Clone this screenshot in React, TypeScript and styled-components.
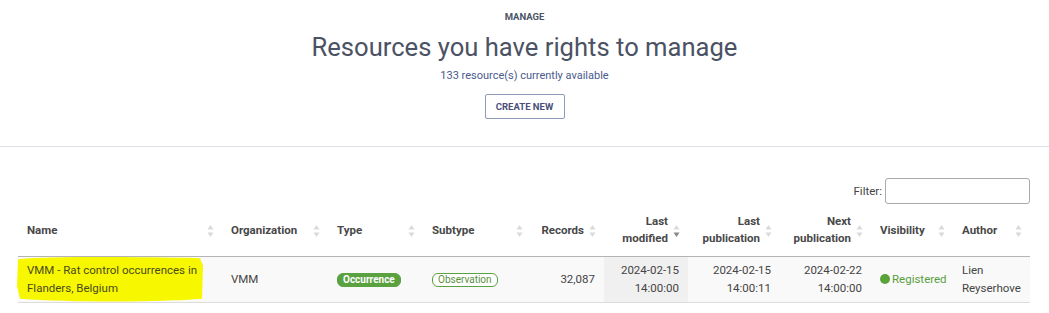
import React from "react";
import styled, { createGlobalStyle } from "styled-components";

const GlobalStyle = createGlobalStyle`
  body {
    margin: 0;
    background: #fff;
    font-family: Roboto, "Liberation Sans", Arial, sans-serif;
    color: #444;
  }
`;

type Col = {
  label: string[];
  width: number;
  align: "left" | "right";
  sorted?: boolean;
};

const columns: Col[] = [
  { label: ["Name"], width: 204, align: "left" },
  { label: ["Organization"], width: 106, align: "left" },
  { label: ["Type"], width: 95, align: "left" },
  { label: ["Subtype"], width: 108, align: "left" },
  { label: ["Records"], width: 73, align: "right" },
  { label: ["Last", "modified"], width: 84, align: "right", sorted: true },
  { label: ["Last", "publication"], width: 92, align: "right" },
  { label: ["Next", "publication"], width: 91, align: "right" },
  { label: ["Visibility"], width: 82, align: "left" },
  { label: ["Author"], width: 77, align: "left" },
];

const SortIcon = ({ sorted }: { sorted?: boolean }) => (
  <SortSvg width="7" height="14" viewBox="0 0 7 14">
    <path d="M3.5 1 L6.5 5.5 L0.5 5.5 Z" fill="#dadada" />
    <path d="M3.5 13 L6.5 8.5 L0.5 8.5 Z" fill={sorted ? "#8a8a8a" : "#dadada"} />
  </SortSvg>
);

export default function App() {
  return (
    <Page>
      <GlobalStyle />
      <Header>
        <Eyebrow>MANAGE</Eyebrow>
        <Title>Resources you have rights to manage</Title>
        <Count>133 resource(s) currently available</Count>
        <OutlineButton>CREATE NEW</OutlineButton>
      </Header>
      <Divider />
      <TableSection>
        <FilterRow>
          <FilterLabel>
            Filter: <FilterInput type="text" />
          </FilterLabel>
        </FilterRow>
        <Table>
          <colgroup>
            {columns.map((c) => (
              <col key={c.label.join(" ")} style={{ width: c.width }} />
            ))}
          </colgroup>
          <thead>
            <tr>
              {columns.map((c) => (
                <Th key={c.label.join(" ")} $align={c.align}>
                  {c.label.map((l, i) => (
                    <React.Fragment key={l}>
                      {i > 0 && <br />}
                      {l}
                    </React.Fragment>
                  ))}
                  <SortIcon sorted={c.sorted} />
                </Th>
              ))}
            </tr>
          </thead>
          <tbody>
            <Row>
              <Td $align="left">
                <NameCell>
                  <Highlight viewBox="0 0 190 46" preserveAspectRatio="none">
                    <path
                      d="M2 4 C40 1 120 2 184 3 L187 10 L186 42 C150 45 60 46 4 42 L1 30 Z"
                      fill="#f7f700"
                    />
                  </Highlight>
                  <NameText>VMM - Rat control occurrences in Flanders, Belgium</NameText>
                </NameCell>
              </Td>
              <Td $align="left">VMM</Td>
              <Td $align="left">
                <Badge $filled>Occurrence</Badge>
              </Td>
              <Td $align="left">
                <Badge>Observation</Badge>
              </Td>
              <Td $align="right">32,087</Td>
              <Td $align="right" $sorted>
                2024-02-15
                <br />
                14:00:00
              </Td>
              <Td $align="right">
                2024-02-15
                <br />
                14:00:11
              </Td>
              <Td $align="right">
                2024-02-22
                <br />
                14:00:00
              </Td>
              <Td $align="left">
                <Status>
                  <Dot />
                  Registered
                </Status>
              </Td>
              <Td $align="left">
                Lien
                <br />
                Reyserhove
              </Td>
            </Row>
          </tbody>
        </Table>
      </TableSection>
    </Page>
  );
}

const Page = styled.div`
  width: 1049px;
`;

const Header = styled.header`
  display: flex;
  flex-direction: column;
  align-items: center;
  padding-top: 11px;
  padding-bottom: 27px;
`;

const Eyebrow = styled.div`
  font-size: 9.5px;
  font-weight: 700;
  color: #4b5366;
  line-height: 12px;
`;

const Title = styled.h1`
  margin: 8px 0 0;
  font-size: 25.6px;
  font-weight: 400;
  color: #4b5263;
  line-height: 32px;
`;

const Count = styled.div`
  margin-top: 6px;
  font-size: 11px;
  color: #4a5a8c;
  line-height: 14px;
`;

const OutlineButton = styled.button`
  margin-top: 11px;
  width: 80px;
  height: 25px;
  background: #fff;
  border: 1px solid #8e9bb8;
  border-radius: 2px;
  font-family: inherit;
  font-size: 9.5px;
  font-weight: 700;
  color: #4a4f7a;
  padding: 0;
`;

const Divider = styled.hr`
  margin: 0;
  border: 0;
  border-top: 1px solid #dde1e8;
`;

const TableSection = styled.section`
  padding: 31px 19px 0 18px;
`;

const FilterRow = styled.div`
  display: flex;
  justify-content: flex-end;
  margin-bottom: 5px;
`;

const FilterLabel = styled.label`
  display: flex;
  align-items: center;
  gap: 3px;
  font-size: 11.5px;
  color: #444;
`;

const FilterInput = styled.input`
  width: 145px;
  height: 26px;
  box-sizing: border-box;
  border: 1px solid #aaa;
  border-radius: 3px;
  padding: 4px;
`;

const Table = styled.table`
  width: 1012px;
  table-layout: fixed;
  border-collapse: collapse;
  font-size: 11.5px;
`;

const Th = styled.th<{ $align: "left" | "right" }>`
  position: relative;
  text-align: ${(p) => p.$align};
  font-weight: 700;
  color: #484848;
  line-height: 17px;
  padding: 3px 20px 8px 9px;
  height: 36px;
  border-bottom: 1px solid #b4b4b4;
  vertical-align: middle;
`;

const SortSvg = styled.svg`
  position: absolute;
  right: 8px;
  top: calc(50% - 2px);
  transform: translateY(-50%);
`;

const Row = styled.tr`
  background: #f9f9f9;
  border-bottom: 1px solid #dcdcdc;
`;

const Td = styled.td<{ $align: "left" | "right"; $sorted?: boolean }>`
  text-align: ${(p) => p.$align};
  padding: 4px 9px 5px 9px;
  height: 36px;
  line-height: 18px;
  color: #444;
  vertical-align: middle;
  background: ${(p) => (p.$sorted ? "#f0f0f0" : "transparent")};
`;

const NameCell = styled.div`
  position: relative;
`;

const Highlight = styled.svg`
  position: absolute;
  left: -11px;
  top: -6px;
  width: 190px;
  height: 48px;
`;

const NameText = styled.span`
  position: relative;
  color: #4a4a20;
`;

const Badge = styled.span<{ $filled?: boolean }>`
  display: inline-block;
  box-sizing: border-box;
  height: 14px;
  line-height: 12px;
  padding: 0 5px;
  border-radius: 6px;
  font-size: 10px;
  border: 1px solid #5aa140;
  background: ${(p) => (p.$filled ? "#5aa140" : "#fff")};
  color: ${(p) => (p.$filled ? "#fff" : "#5a8f3e")};
  font-weight: ${(p) => (p.$filled ? 700 : 400)};
`;

const Status = styled.span`
  display: inline-flex;
  align-items: center;
  gap: 2px;
  color: #5a9e3f;
  font-size: 11.5px;
`;

const Dot = styled.span`
  width: 10px;
  height: 10px;
  border-radius: 50%;
  background: #5aa33c;
`;
